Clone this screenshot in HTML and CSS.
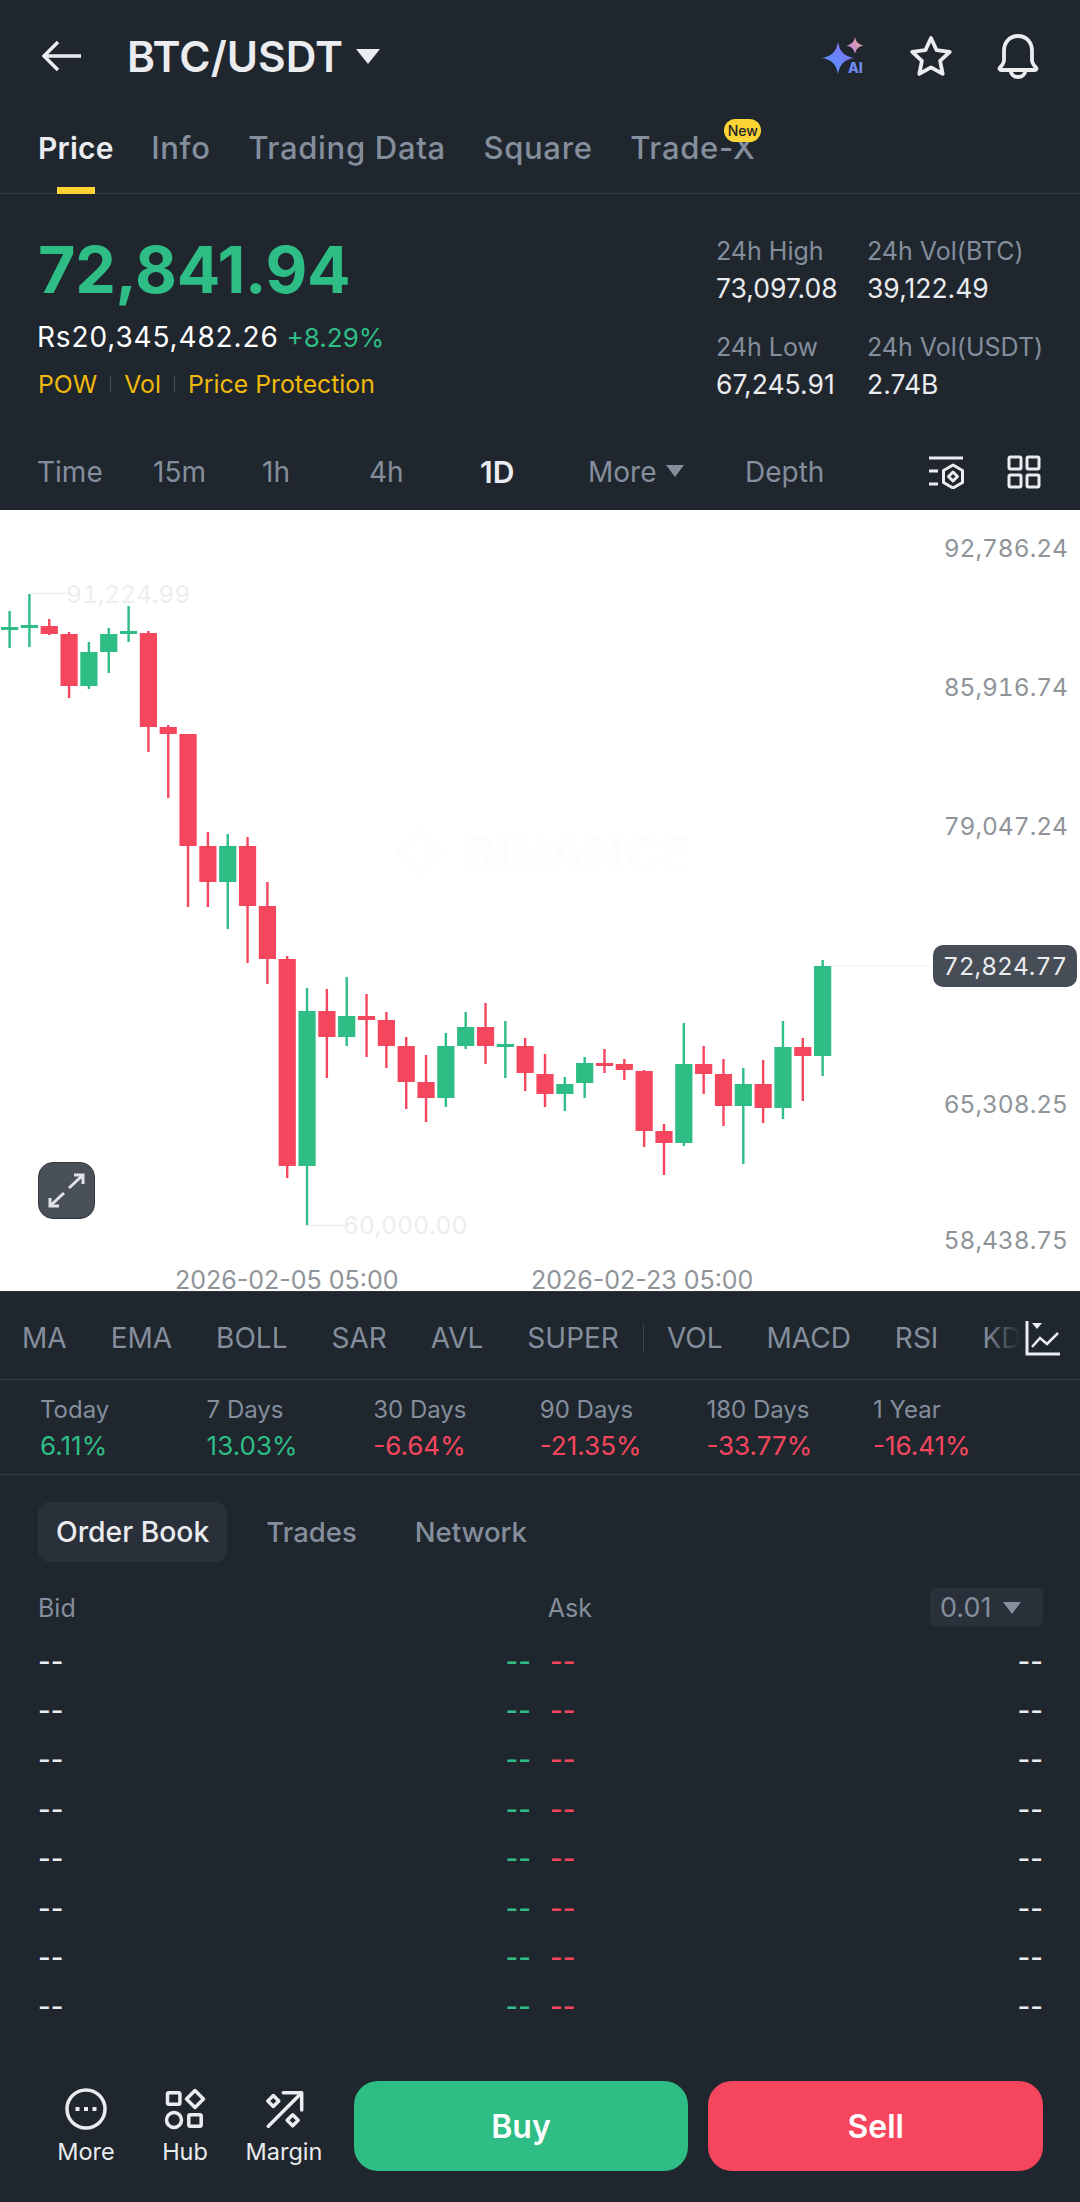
FILE: index.html
```html
<!DOCTYPE html>
<html lang="en">
<head>
    <meta charset="UTF-8">
    <meta name="viewport" content="width=device-width, initial-scale=1.0">
    <title>BTC/USDT</title>
    <link rel="stylesheet" href="styles.css">
</head>
<body>
    <div class="app">
        <header class="top-bar">
            <svg class="back-icon" width="40" height="32" viewBox="0 0 40 32"><path d="M39 16H3M16 2 2 16l14 14"/></svg>
            <h1 class="pair">BTC/USDT</h1>
            <span class="caret caret-title"></span>
            <div class="top-actions">
                <svg class="ai-icon" width="48" height="42" viewBox="0 0 48 42">
                    <defs>
                        <linearGradient id="aiBlue" x1="0" y1="1" x2="1" y2="0"><stop offset="0" stop-color="#4d9bff"/><stop offset="1" stop-color="#8a6cf5"/></linearGradient>
                        <linearGradient id="aiPink" x1="0" y1="1" x2="1" y2="0"><stop offset="0" stop-color="#b184ee"/><stop offset="1" stop-color="#f0a98a"/></linearGradient>
                    </defs>
                    <path fill="url(#aiBlue)" d="M18 7c2 10 6 14 16 16-10 2-14 6-16 16-2-10-6-14-16-16 10-2 14-6 16-16z"/>
                    <path fill="url(#aiPink)" d="M35 2c1 5 3 7 8.500 8.500-5.500 1.500-7.500 3.500-8.500 8.500-1-5-3-7-8.500-8.500 5.500-1.500 7.500-3.500 8.500-8.500z"/>
                    <text x="28" y="38" class="ai-text">AI</text>
                </svg>
                <svg class="line-icon star" width="44" height="42" viewBox="0 0 44 42"><path d="M22 3l5.600 12.200 13.200 1.600-9.700 9 2.600 13.100L22 32.400 10.300 38.900l2.600-13.100-9.700-9 13.200-1.600z"/></svg>
                <svg class="line-icon bell" width="44" height="46" viewBox="0 0 44 46"><path d="M22 3C13.500 3 8 9.500 8 18v9c0 3-1.500 5-4 7.500-1 1-.5 2.500 1 2.500h34c1.500 0 2-1.500 1-2.500C37.500 32 36 30 36 27v-9C36 9.500 30.500 3 22 3z"/><path d="M14.500 37.500c.5 4 3.500 6.500 7.500 6.500s7-2.500 7.500-6.500"/></svg>
            </div>
        </header>

        <nav class="tabs">
            <a class="tab active">Price</a>
            <a class="tab">Info</a>
            <a class="tab">Trading Data</a>
            <a class="tab">Square</a>
            <a class="tab tab-new">Trade-X<span class="new-badge">New</span></a>
        </nav>

        <section class="ticker">
            <div class="ticker-main">
                <div class="last-price">72,841.94</div>
                <div class="fiat-line"><span class="fiat">Rs20,345,482.26</span><span class="up">+8.29%</span></div>
                <div class="tags">
                    <span>POW</span><i></i><span>Vol</span><i></i><span>Price Protection</span>
                </div>
            </div>
            <div class="ticker-stats">
                <div class="stat"><span>24h High</span><b>73,097.08</b></div>
                <div class="stat"><span>24h Vol(BTC)</span><b>39,122.49</b></div>
                <div class="stat"><span>24h Low</span><b>67,245.91</b></div>
                <div class="stat"><span>24h Vol(USDT)</span><b>2.74B</b></div>
            </div>
        </section>

        <div class="intervals">
            <span>Time</span>
            <span>15m</span>
            <span>1h</span>
            <span>4h</span>
            <span class="active">1D</span>
            <span class="more">More<span class="caret caret-more"></span></span>
            <span>Depth</span>
            <div class="interval-icons">
                <svg class="line-icon thin" width="36" height="34" viewBox="0 0 36 34"><path d="M1 3h34M1 16h9M1 29h9"/><path d="M25 10l9.500 5.500v12L25 33l-9.500-5.500v-12z"/><path d="M25 17l4.500 4.500-4.500 4.500-4.500-4.500z"/></svg>
                <svg class="line-icon thin" width="36" height="34" viewBox="0 0 36 34"><rect x="3" y="2" width="12" height="12" rx="1.500"/><rect x="21" y="2" width="12" height="12" rx="1.500"/><rect x="3" y="20" width="12" height="12" rx="1.500"/><rect x="21" y="20" width="12" height="12" rx="1.500"/></svg>
            </div>
        </div>

        <section class="chart">
            <svg id="candles" class="candles" width="1080" height="781" viewBox="0 510 1080 781"></svg>
            <div class="watermark-logo"></div>
            <div class="watermark">BINANCE</div>
            <div class="axis-label" data-y="548">92,786.24</div>
            <div class="axis-label" data-y="687">85,916.74</div>
            <div class="axis-label" data-y="826">79,047.24</div>
            <div class="axis-label" data-y="1104">65,308.25</div>
            <div class="axis-label" data-y="1240">58,438.75</div>
            <div class="price-tag">72,824.77</div>
            <div class="extreme extreme-high">91,224.99</div>
            <div class="extreme extreme-low">60,000.00</div>
            <div class="date-label date-one">2026-02-05 05:00</div>
            <div class="date-label date-two">2026-02-23 05:00</div>
            <button class="expand">
                <svg width="40" height="40" viewBox="0 0 40 40"><path d="M27 4h9v9M36 4 22 17M3 27v8h9M3 35l14-13"/></svg>
            </button>
        </section>

        <div class="indicators">
            <div class="indicator-list">
                <span>MA</span><span>EMA</span><span>BOLL</span><span>SAR</span><span>AVL</span><span>SUPER</span>
                <i></i>
                <span>VOL</span><span>MACD</span><span>RSI</span><span>KD</span>
            </div>
            <svg class="indicator-icon" width="36" height="36" viewBox="0 0 36 36">
                <path class="axes" d="M2 1v33h33"/>
                <path class="trend" d="M7 27l8-9 7 6 11-11"/>
                <path class="solid" d="M7 3h10l-5 6z"/>
            </svg>
        </div>

        <div class="performance">
            <div><span>Today</span><b class="up">6.11%</b></div>
            <div><span>7 Days</span><b class="up">13.03%</b></div>
            <div><span>30 Days</span><b class="down">-6.64%</b></div>
            <div><span>90 Days</span><b class="down">-21.35%</b></div>
            <div><span>180 Days</span><b class="down">-33.77%</b></div>
            <div><span>1 Year</span><b class="down">-16.41%</b></div>
        </div>

        <div class="book-tabs">
            <a class="active">Order Book</a>
            <a>Trades</a>
            <a class="network">Network</a>
        </div>

        <div class="book-head">
            <span class="book-bid">Bid</span>
            <span class="book-ask">Ask</span>
            <span class="tick-size">0.01<span class="caret caret-tick"></span></span>
        </div>

        <div class="book-rows">
            <div class="book-row"><span>--</span><span class="up">--</span><span class="down">--</span><span>--</span></div>
            <div class="book-row"><span>--</span><span class="up">--</span><span class="down">--</span><span>--</span></div>
            <div class="book-row"><span>--</span><span class="up">--</span><span class="down">--</span><span>--</span></div>
            <div class="book-row"><span>--</span><span class="up">--</span><span class="down">--</span><span>--</span></div>
            <div class="book-row"><span>--</span><span class="up">--</span><span class="down">--</span><span>--</span></div>
            <div class="book-row"><span>--</span><span class="up">--</span><span class="down">--</span><span>--</span></div>
            <div class="book-row"><span>--</span><span class="up">--</span><span class="down">--</span><span>--</span></div>
            <div class="book-row"><span>--</span><span class="up">--</span><span class="down">--</span><span>--</span></div>
        </div>

        <footer class="bottom-bar">
            <div class="bottom-links">
                <a class="bottom-link">
                    <svg class="line-icon" width="46" height="46" viewBox="0 0 46 46"><circle cx="23" cy="23" r="19"/><path class="solid" d="M12.500 21h4v4h-4zM21 21h4v4h-4zM29.500 21h4v4h-4z"/></svg>
                    More
                </a>
                <a class="bottom-link">
                    <svg class="line-icon" width="46" height="46" viewBox="0 0 46 46"><rect x="5.500" y="6.800" width="12.400" height="11.400" rx="1.500"/><path d="M33 4.500l8.500 8.500-8.500 8.500-8.500-8.500z"/><circle cx="12" cy="34" r="7.500"/><rect x="26.800" y="28.800" width="12.400" height="11.400" rx="1.500"/></svg>
                    Hub
                </a>
                <a class="bottom-link">
                    <svg class="line-icon" width="46" height="46" viewBox="0 0 46 46"><path d="M7.300 40.300 40.700 6.700M22.300 6.700h18.400V24"/><path d="M12.300 9.500l5.500 5.500-5.500 5.500-5.500-5.500zM31.700 28.800l5.500 5.500-5.500 5.500-5.500-5.500z"/></svg>
                    Margin
                </a>
            </div>
            <button class="trade-btn buy">Buy</button>
            <button class="trade-btn sell">Sell</button>
        </footer>
    </div>

    <script src="chart.js"></script>
</body>
</html>
```

FILE: styles.css
```css
:root {
    --bg: #1f262e;
    --line: #333b45;
    --muted: #848e9c;
    --text: #eaecef;
    --green: #2ebd85;
    --red: #f6465d;
    --yellow: #f0b90b;
}

* {
    box-sizing: border-box;
    font-family: Inter, 'Noto Sans', sans-serif;
}

body {
    margin: 0;
    background: var(--bg);
    color: var(--text);
}

a {
    display: block;
}

.app {
    width: 1080px;
    height: 2202px;
    overflow: hidden;
}

.up {
    color: var(--green);
}

.down {
    color: var(--red);
}

.caret {
    display: inline-block;
    width: 0;
    height: 0;
    border-left: 10px solid transparent;
    border-right: 10px solid transparent;
    border-top: 13px solid currentColor;
}

.line-icon {
    fill: none;
    stroke: var(--text);
    stroke-width: 3.5;
    stroke-linejoin: round;
    stroke-linecap: round;
}

.line-icon.thin {
    stroke-width: 3;
    stroke-linecap: butt;
}

.line-icon .solid {
    fill: var(--text);
    stroke: none;
}

/* header */
.top-bar {
    height: 112px;
    display: flex;
    align-items: center;
    padding: 0 40px 0 42px;
}

.back-icon {
    fill: none;
    stroke: var(--text);
    stroke-width: 3.5;
    margin-right: 45px;
}

.pair {
    margin: 0;
    font-size: 42.5px;
    font-weight: 600;
}

.caret-title {
    margin: 0 0 0 13px;
    border-left-width: 12px;
    border-right-width: 12px;
    border-top-width: 15px;
    color: var(--text);
}

.top-actions {
    margin-left: auto;
    display: flex;
    align-items: center;
    gap: 41px;
}

.star {
    margin-right: 2px;
}

.star,
.bell {
    stroke-width: 3.8;
}

.ai-text {
    font-size: 14px;
    font-weight: 800;
    fill: #6f8df2;
}

.tabs {
    height: 82px;
    display: flex;
    gap: 37.5px;
    padding: 17px 38px 0;
    border-bottom: 1px solid var(--line);
    font-size: 31px;
    font-weight: 500;
    letter-spacing: 0.7px;
    color: var(--muted);
}

.tab {
    position: relative;
    height: 65px;
}

.tab.active {
    color: var(--text);
    font-size: 30px;
    font-weight: 600;
    letter-spacing: 0.2px;
    line-height: 38px;
}

.tab.active::after {
    content: '';
    position: absolute;
    left: 19px;
    bottom: 0;
    width: 38px;
    height: 7px;
    background: #fcd535;
}

.new-badge {
    position: absolute;
    top: -10px;
    right: -6px;
    width: 37px;
    height: 23px;
    border-radius: 12px;
    background: #fcd535;
    color: #1e2329;
    font-size: 14px;
    font-weight: 500;
    letter-spacing: 0;
    line-height: 23px;
    text-align: center;
}

/* price */
.ticker {
    height: 242px;
    display: flex;
    justify-content: space-between;
    padding: 38px 35px 0 38px;
}

.last-price {
    font-size: 64.5px;
    font-weight: 700;
    line-height: 76px;
    letter-spacing: -0.3px;
    color: var(--green);
}

.fiat-line {
    margin-top: 12px;
    display: flex;
    align-items: baseline;
    font-size: 26px;
    line-height: 34px;
}

.fiat {
    color: #fff;
    margin: 0 8px 0 -1px;
    font-size: 28px;
    letter-spacing: 0.85px;
}

.tags {
    margin-top: 12px;
    display: flex;
    align-items: center;
    font-size: 24.8px;
    line-height: 34px;
    color: var(--yellow);
}

.tags i {
    width: 1px;
    height: 16px;
    margin: 0 13px;
    background: #474d57;
}

.ticker-stats {
    width: 329px;
    display: grid;
    grid-template-columns: 151px auto;
    grid-auto-rows: 96px;
    padding-top: 1px;
}

.stat span {
    display: block;
    font-size: 25px;
    line-height: 37px;
    color: var(--muted);
}

.stat b {
    display: block;
    font-size: 26.5px;
    font-weight: 400;
    line-height: 37px;
    color: var(--text);
}

.intervals {
    height: 74px;
    display: grid;
    grid-template-columns: 116px 109px 107px 111px 108px 157px auto 1fr;
    align-items: center;
    padding: 0 38px 2px 37px;
    font-size: 28px;
    color: var(--muted);
}

.intervals .active {
    color: var(--text);
    font-size: 30px;
    font-weight: 600;
}

.more {
    display: flex;
    align-items: center;
}

.caret-more {
    margin-left: 10px;
    margin-bottom: 3px;
    border-left-width: 9px;
    border-right-width: 9px;
    border-top-width: 12px;
}

.interval-icons {
    display: flex;
    justify-content: flex-end;
    gap: 42px;
}

/* chart */
.chart {
    position: relative;
    height: 781px;
    background: #fff;
}

.candles {
    position: absolute;
    inset: 0;
}

.watermark {
    position: absolute;
    left: 463px;
    top: 320px;
    font-size: 48px;
    font-weight: 700;
    line-height: 48px;
    letter-spacing: 1.5px;
    color: #fdfdfd;
}

.watermark-logo {
    position: absolute;
    left: 402px;
    top: 325px;
    width: 34px;
    height: 34px;
    border: 7px solid #fdfdfd;
    transform: rotate(45deg);
}

.axis-label {
    position: absolute;
    right: 12px;
    font-size: 24.5px;
    font-variant-numeric: tabular-nums;
    line-height: 32px;
    color: #8f9499;
    transform: translateY(-50%);
}

.price-tag {
    position: absolute;
    left: 933px;
    top: 435px;
    width: 144px;
    height: 42px;
    border-radius: 10px;
    background: #474d57;
    color: #eaecef;
    font-size: 24.5px;
    font-variant-numeric: tabular-nums;
    line-height: 42px;
    text-align: center;
}

.extreme {
    position: absolute;
    font-size: 24.5px;
    font-variant-numeric: tabular-nums;
    line-height: 32px;
    color: #eceded;
}

.extreme-high {
    left: 66px;
    top: 68px;
}

.extreme-low {
    left: 343px;
    top: 699px;
}

.date-label {
    position: absolute;
    top: 759px;
    font-size: 25px;
    line-height: 22px;
    color: #8f9499;
}

.date-one {
    left: 175px;
}

.date-two {
    left: 531px;
}

.expand {
    position: absolute;
    left: 38px;
    top: 652px;
    width: 57px;
    height: 57px;
    padding: 8px;
    border: 1px solid #33383f;
    border-radius: 15px;
    background: #4a5058;
}

.expand svg {
    display: block;
    fill: none;
    stroke: #dfe3e8;
    stroke-width: 3;
}

/* indicators */
.indicators {
    position: relative;
    height: 89px;
    display: flex;
    align-items: center;
    padding: 5px 0 0 22px;
    border-top: 1px solid #2b323b;
    border-bottom: 1px solid var(--line);
}

.indicator-list {
    width: 998px;
    display: flex;
    align-items: center;
    gap: 44px;
    white-space: nowrap;
    font-size: 28px;
    color: var(--muted);
}

.indicator-list i {
    flex: none;
    width: 1px;
    height: 28px;
    margin: 0 -21px 0 -20px;
    background: #3a424c;
}

.indicators::after {
    content: '';
    position: absolute;
    left: 985px;
    top: 0;
    width: 36px;
    height: 100%;
    background: linear-gradient(to right, rgba(31, 38, 46, 0), var(--bg));
}

.indicator-icon {
    position: relative;
    z-index: 1;
    flex: none;
    margin-left: 5px;
    fill: none;
}

.indicator-icon .axes {
    stroke: var(--text);
    stroke-width: 3;
}

.indicator-icon .trend {
    stroke: var(--text);
    stroke-width: 2.5;
}

.indicator-icon .solid {
    fill: var(--text);
}

.performance {
    height: 95px;
    display: grid;
    grid-template-columns: repeat(6, 166.6px);
    align-content: center;
    padding: 2px 0 0 40px;
    border-bottom: 1px solid var(--line);
}

.performance span {
    display: block;
    font-size: 24px;
    line-height: 36px;
    color: var(--muted);
}

.performance b {
    display: block;
    font-size: 26px;
    font-weight: 400;
    line-height: 36px;
}

/* order book */
.book-tabs {
    display: flex;
    align-items: center;
    gap: 39px;
    height: 60px;
    margin: 27px 38px 0;
    font-size: 27.5px;
    font-weight: 500;
    color: var(--muted);
}

.book-tabs .active {
    padding: 0 18px;
    line-height: 60px;
    border-radius: 12px;
    background: #2a303a;
    color: var(--text);
    font-size: 28.3px;
}

.book-tabs .network {
    margin-left: 19px;
}

.book-head {
    position: relative;
    height: 41px;
    display: flex;
    align-items: center;
    margin: 25px 37px 0 38px;
    font-size: 25px;
    color: var(--muted);
}

.book-ask {
    margin-left: 472px;
}

.tick-size {
    margin-left: auto;
    width: 113px;
    height: 39px;
    display: flex;
    align-items: center;
    padding-left: 10px;
    border-radius: 6px;
    background: #2a303a;
    font-size: 27px;
}

.caret-tick {
    margin-left: 12px;
    border-left-width: 9px;
    border-right-width: 9px;
    border-top-width: 12px;
}

.book-rows {
    margin-top: 8px;
    padding: 0 37px 0 38px;
}

.book-row {
    height: 49.4px;
    display: grid;
    grid-template-columns: 1fr auto auto 1fr;
    align-items: center;
    font-size: 27.5px;
    font-weight: 500;
}

.book-row span:nth-child(2) {
    margin-right: 19px;
}

.book-row span:last-child {
    text-align: right;
}

/* footer */
.bottom-bar {
    position: relative;
    display: flex;
    align-items: center;
    gap: 20px;
    margin-top: 50px;
    padding: 0 37px 0 46px;
}

.bottom-links {
    width: 288px;
    display: flex;
    gap: 19px;
}

.bottom-link {
    width: 80px;
    display: flex;
    flex-direction: column;
    align-items: center;
    gap: 5px;
    font-size: 23.5px;
    line-height: 29px;
    color: var(--text);
}

.trade-btn {
    width: 335px;
    height: 90px;
    border: none;
    border-radius: 24px;
    color: #fff;
    font-size: 32px;
    font-weight: 600;
    padding: 0;
}

.buy {
    background: var(--green);
}

.sell {
    background: var(--red);
}
```

FILE: chart.js
```js
// color, wick top, body top, body bottom, wick bottom (page y)
const candles = [
    ['g', 611, 627, 630, 648], ['g', 594, 625, 628, 647], ['r', 619, 626, 634, 635],
    ['r', 632, 634, 686, 698], ['g', 642, 652, 686, 689], ['g', 628, 634, 652, 673],
    ['g', 606, 631, 634, 642], ['r', 631, 633, 727, 752], ['r', 725, 727, 734, 798],
    ['r', 734, 734, 846, 907], ['r', 832, 846, 882, 907], ['g', 834, 846, 882, 929],
    ['r', 837, 846, 906, 963], ['r', 882, 906, 959, 984], ['r', 956, 959, 1166, 1178],
    ['g', 988, 1011, 1166, 1225], ['r', 989, 1011, 1037, 1078], ['g', 977, 1016, 1037, 1046],
    ['r', 994, 1016, 1020, 1057], ['r', 1012, 1020, 1046, 1068], ['r', 1037, 1046, 1082, 1109],
    ['r', 1055, 1082, 1098, 1122], ['g', 1033, 1046, 1098, 1107], ['g', 1012, 1027, 1046, 1049],
    ['r', 1003, 1027, 1046, 1064], ['g', 1021, 1044, 1047, 1078], ['r', 1038, 1046, 1073, 1091],
    ['r', 1054, 1074, 1094, 1107], ['g', 1077, 1084, 1094, 1111], ['g', 1057, 1063, 1083, 1098],
    ['r', 1049, 1063, 1066, 1073], ['r', 1059, 1064, 1070, 1080], ['r', 1070, 1071, 1131, 1147],
    ['r', 1124, 1131, 1143, 1175], ['g', 1023, 1064, 1143, 1146], ['r', 1046, 1064, 1074, 1094],
    ['r', 1059, 1074, 1106, 1126], ['g', 1068, 1084, 1106, 1164], ['r', 1060, 1084, 1108, 1123],
    ['g', 1021, 1047, 1108, 1119], ['r', 1038, 1047, 1056, 1101], ['g', 960, 966, 1056, 1076]
];

const colors = { g: '#2ebd85', r: '#f6465d' };
const svg = document.getElementById('candles');
let out = '';

// faint guide lines next to the high, low and last price
out += '<path d="M30 593.500H67M306 1225.500H344" stroke="#eceded" stroke-width="1.500" fill="none"/>';
out += '<path d="M830 966H933" stroke="#f4f4f4" stroke-width="1.500" fill="none"/>';

candles.forEach((c, i) => {
    const x = 9.6 + i * 19.83;
    out += `<rect x="${x - 1.2}" y="${c[1]}" width="2.4" height="${c[4] - c[1]}" fill="${colors[c[0]]}"/>`;
    out += `<rect x="${x - 8.6}" y="${c[2]}" width="17.2" height="${c[3] - c[2]}" fill="${colors[c[0]]}"/>`;
});

svg.innerHTML = out;

// axis labels carry their page y in a data attribute
document.querySelectorAll('.axis-label').forEach(label => {
    label.style.top = (label.dataset.y - 510) + 'px';
});
```
